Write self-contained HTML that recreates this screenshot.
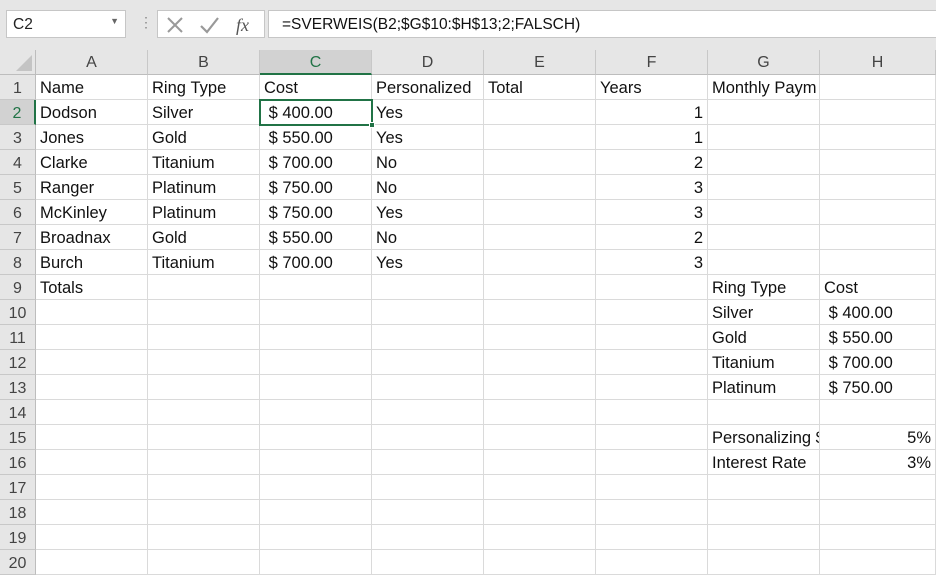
<!DOCTYPE html>
<html><head><meta charset="utf-8"><style>
*{margin:0;padding:0;box-sizing:border-box}
body{width:936px;height:576px;overflow:hidden;background:#fff;font-family:"Liberation Sans",sans-serif;position:relative}
.top{position:absolute;left:0;top:0;width:936px;height:50px;background:#e6e6e6}
.nb{position:absolute;left:6px;top:10px;width:120px;height:28px;background:#fff;border:1px solid #c6c6c6;font-size:15.5px;padding:5px 0 0 6px;color:#222}
.fxb{position:absolute;left:157px;top:10px;width:108px;height:28px;background:#fff;border:1px solid #c6c6c6}
.fi{position:absolute;left:268px;top:10px;width:668px;height:28px;background:#fff;border:1px solid #c6c6c6;border-right:none;font-size:15.5px;padding:5px 0 0 13px;color:#111}
.ch{position:absolute;top:50px;height:25px;background:#e6e6e6;border-right:1px solid #c8c8c8;border-bottom:1px solid #bdbdbd;font-size:16px;text-align:center;line-height:26px;color:#444}
.rh{position:absolute;left:0;width:36px;height:25px;background:#e6e6e6;border-bottom:1px solid #c8c8c8;border-right:1px solid #bdbdbd;font-size:16px;text-align:center;line-height:27px;color:#444}
.c{position:absolute;height:25px;border-right:1px solid #dadada;border-bottom:1px solid #dadada;font-size:16.5px;line-height:27px;padding:0 4px;white-space:nowrap;overflow:hidden;color:#111}
.r{text-align:right}
</style></head><body>
<div class="top"></div>
<div class="nb">C2<span style="position:absolute;right:6px;top:5px;font-size:9px;color:#666">▼</span></div>
<div style="position:absolute;left:139px;top:14px;color:#888;font-size:14px">⋮</div>
<div class="fxb">
<svg width="108" height="28" style="position:absolute;left:0;top:0"><path d="M10 7 L24 21 M24 7 L10 21" stroke="#999" stroke-width="2"/><path d="M43 15 L49 21 L60 7" stroke="#999" stroke-width="2.2" fill="none"/><text x="78" y="20" font-family="Liberation Serif" font-style="italic" font-size="18" fill="#555">fx</text></svg>
</div>
<div class="fi">=SVERWEIS(B2;$G$10:$H$13;2;FALSCH)</div>
<div id="g"></div>
<script>
var cols=[36,148,260,372,484,596,708,820,936],L="ABCDEFGH",h='';
h+='<div style="position:absolute;left:0;top:50px;width:36px;height:25px;background:#e6e6e6;border-right:1px solid #bdbdbd;border-bottom:1px solid #bdbdbd"><svg width="36" height="25"><path d="M32 5 L32 21 L16 21 Z" fill="#c4c4c4"/></svg></div>';
for(var i=0;i<8;i++){var s=i==2?'background:#d2d2d2;color:#217346;border-bottom:2px solid #217346;':'';h+='<div class="ch" style="left:'+cols[i]+'px;width:'+(cols[i+1]-cols[i])+'px;'+s+'">'+L[i]+'</div>';}
var d={1:["Name","Ring Type","Cost","Personalized","Total","Years","Monthly Paym",""],
2:["Dodson","Silver","$ 400.00","Yes","","1","",""],
3:["Jones","Gold","$ 550.00","Yes","","1","",""],
4:["Clarke","Titanium","$ 700.00","No","","2","",""],
5:["Ranger","Platinum","$ 750.00","No","","3","",""],
6:["McKinley","Platinum","$ 750.00","Yes","","3","",""],
7:["Broadnax","Gold","$ 550.00","No","","2","",""],
8:["Burch","Titanium","$ 700.00","Yes","","3","",""],
9:["Totals","","","","","","Ring Type","Cost"],
10:["","","","","","","Silver"," $ 400.00"],
11:["","","","","","","Gold"," $ 550.00"],
12:["","","","","","","Titanium"," $ 700.00"],
13:["","","","","","","Platinum"," $ 750.00"],
15:["","","","","","","Personalizing $","5%"],
16:["","","","","","","Interest Rate","3%"]};
for(var r=1;r<=20;r++){var y=75+(r-1)*25;var rs=r==2?'background:#d2d2d2;color:#217346;border-right:2px solid #217346;':'';
h+='<div class="rh" style="top:'+y+'px;'+rs+'">'+r+'</div>';
for(var i=0;i<8;i++){var t=(d[r]||[])[i]||'';var cl='c';
if(i==5&&r>=2&&r<=8)cl+=' r';if(i==7&&(r==15||r==16))cl+=' r';
if(i==2&&r>=2&&r<=8)t=' '+t;
h+='<div class="'+cl+'" style="left:'+cols[i]+'px;top:'+y+'px;width:'+(cols[i+1]-cols[i])+'px">'+t.replace(/ /g,'&nbsp;')+'</div>';}}
h+='<div style="position:absolute;left:259px;top:99px;width:114px;height:27px;border:2px solid #217346"></div><div style="position:absolute;left:369px;top:122px;width:6px;height:6px;background:#217346;border:1px solid #fff"></div>';
document.getElementById('g').innerHTML=h;
</script>
</body></html>
